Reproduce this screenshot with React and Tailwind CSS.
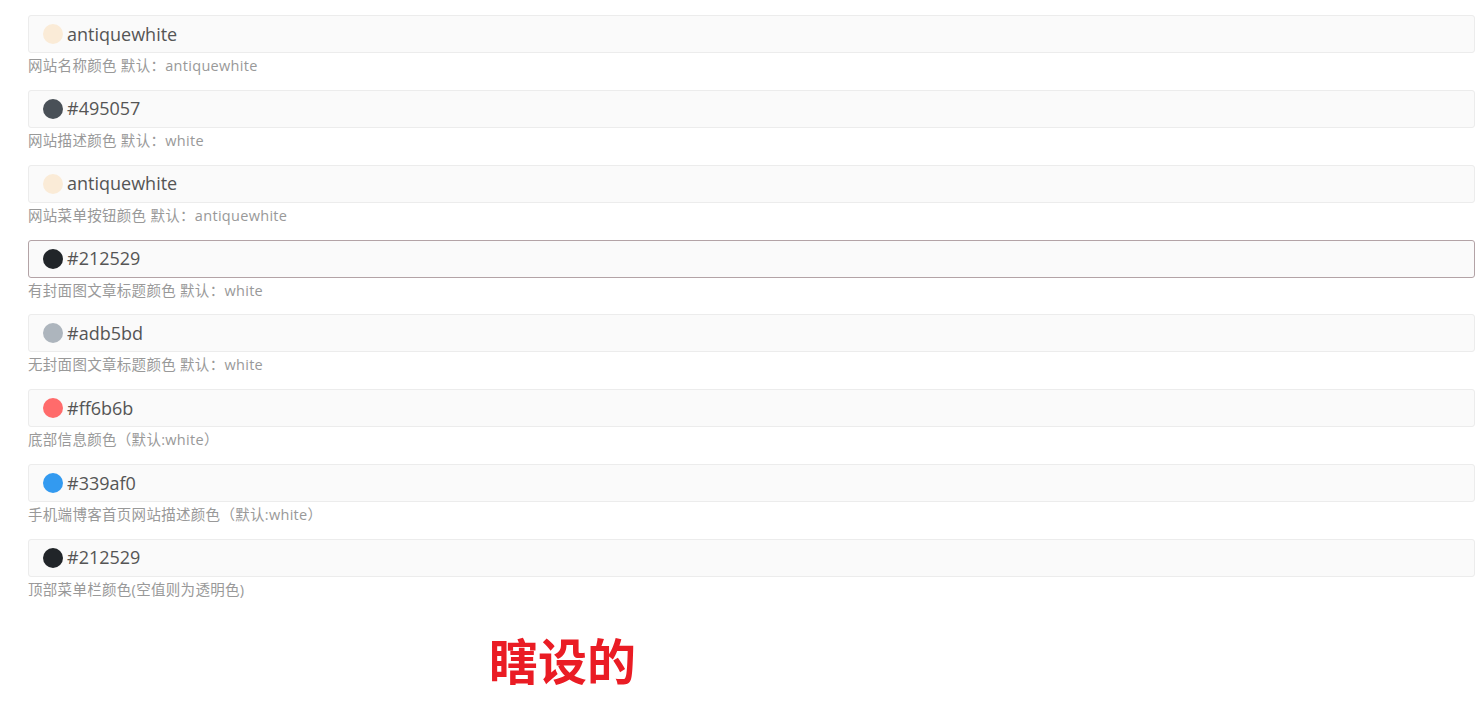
const fields = [
  { value: 'antiquewhite', swatch: 'bg-[#faebd7]', hint: '网站名称颜色 默认：antiquewhite' },
  { value: '#495057', swatch: 'bg-[#495057]', hint: '网站描述颜色 默认：white' },
  { value: 'antiquewhite', swatch: 'bg-[#faebd7]', hint: '网站菜单按钮颜色 默认：antiquewhite' },
  { value: '#212529', swatch: 'bg-[#212529]', hint: '有封面图文章标题颜色 默认：white', focused: true },
  { value: '#adb5bd', swatch: 'bg-[#adb5bd]', hint: '无封面图文章标题颜色 默认：white' },
  { value: '#ff6b6b', swatch: 'bg-[#ff6b6b]', hint: '底部信息颜色（默认:white）' },
  { value: '#339af0', swatch: 'bg-[#339af0]', hint: '手机端博客首页网站描述颜色（默认:white）' },
  { value: '#212529', swatch: 'bg-[#212529]', hint: '顶部菜单栏颜色(空值则为透明色)' },
];

function ColorField({ value, swatch, hint, focused }) {
  return (
    <div className="mb-[13.85px]">
      <div
        className={`flex h-[38px] items-center rounded-[3px] border bg-[#fafafa] pl-[14px] ${
          focused ? 'border-[#b3a3a6]' : 'border-[#ececec]'
        }`}
      >
        <span className={`h-[20px] w-[20px] rounded-full ${swatch}`} />
        <span className="ml-[4px] text-[18px] text-[#555]">{value}</span>
      </div>
      <p className="mt-[3px] text-[14.5px] leading-[20px] tracking-[0.3px] text-[#999]">{hint}</p>
    </div>
  );
}

export default function App() {
  return (
    <div
      className="min-h-[722px] bg-white pl-[28px] pr-[3px] pt-[15px]"
      style={{ fontFamily: '"Open Sans", "Noto Sans CJK SC", sans-serif' }}
    >
      {fields.map((f, i) => (
        <ColorField key={i} {...f} />
      ))}
      <div className="mt-[31px] pl-[461px] text-[49px] font-semibold leading-[60px] text-[#ea1c24]">
        瞎设的
      </div>
    </div>
  );
}
